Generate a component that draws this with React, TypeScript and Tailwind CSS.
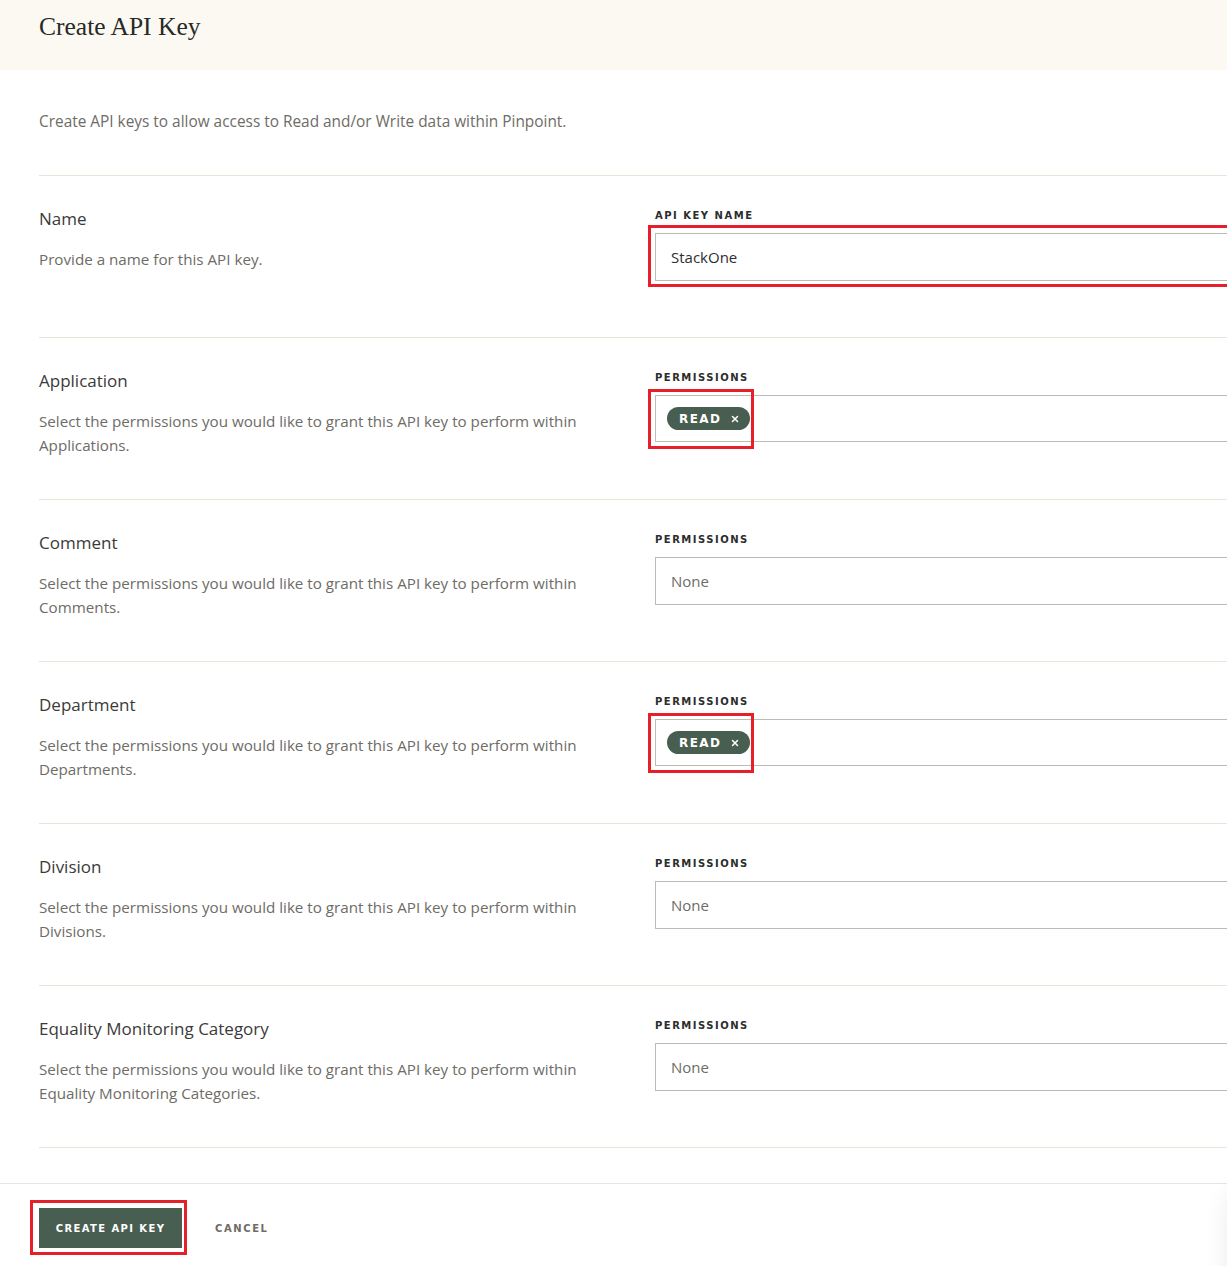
import { X } from 'lucide-react'

type Row = {
  title: string
  description: string
  label: string
  value?: string
  chip?: boolean
  kind: 'text' | 'select'
}

const rows: Row[] = [
  { title: 'Name', description: 'Provide a name for this API key.', label: 'API KEY NAME', value: 'StackOne', kind: 'text' },
  {
    title: 'Application',
    description: 'Select the permissions you would like to grant this API key to perform within Applications.',
    label: 'PERMISSIONS',
    chip: true,
    kind: 'select',
  },
  {
    title: 'Comment',
    description: 'Select the permissions you would like to grant this API key to perform within Comments.',
    label: 'PERMISSIONS',
    kind: 'select',
  },
  {
    title: 'Department',
    description: 'Select the permissions you would like to grant this API key to perform within Departments.',
    label: 'PERMISSIONS',
    chip: true,
    kind: 'select',
  },
  {
    title: 'Division',
    description: 'Select the permissions you would like to grant this API key to perform within Divisions.',
    label: 'PERMISSIONS',
    kind: 'select',
  },
  {
    title: 'Equality Monitoring Category',
    description:
      'Select the permissions you would like to grant this API key to perform within Equality Monitoring Categories.',
    label: 'PERMISSIONS',
    kind: 'select',
  },
]

const sans = "font-['Open_Sans','Noto_Sans',sans-serif]"
const caps = "font-['DejaVu_Sans','Noto_Sans',sans-serif]"

function Field({ row }: { row: Row }) {
  if (row.kind === 'text') {
    return (
      <div className="relative">
        {/* highlight */}
        <span className="pointer-events-none absolute left-[-7px] top-[-8px] bottom-[-6px] right-[-4px] border-[3px] border-[#e6202a]" />
        <div className="flex h-[48px] w-[620px] items-center border border-[#bcbcb4] px-[15px] text-[15px] text-[#2e2e2e]">
          {row.value}
        </div>
      </div>
    )
  }

  if (row.chip) {
    return (
      <div className="relative">
        <span className="pointer-events-none absolute left-[-7px] top-[-6px] h-[60px] w-[106px] border-[3px] border-[#e6202a]" />
        <div className="flex h-[47px] w-[620px] items-center border border-[#bcbcb4] pl-[11px]">
          <span
            className={`flex h-[23px] items-center gap-[9px] rounded-full bg-[#475e50] pl-[12px] pr-[10px] text-[12px] font-bold tracking-[0.12em] text-white ${caps}`}
          >
            READ
            <X size={10} strokeWidth={3.5} />
          </span>
        </div>
      </div>
    )
  }

  return (
    <div className="flex h-[48px] w-[620px] items-center border border-[#bcbcb4] px-[15px] text-[15px] text-[#6e6c66]">
      None
    </div>
  )
}

export default function App() {
  return (
    <div className={`relative min-h-[1266px] overflow-hidden bg-white ${sans}`}>
      {/* Header */}
      <div className="h-[70px] bg-[#fcf9f2] px-[39px] pt-[11px]">
        <h1 className="font-['Liberation_Serif','DejaVu_Serif',serif] text-[25.5px] leading-[32px] text-[#262a28]">
          Create API Key
        </h1>
      </div>

      <div className="pl-[39px]">
        <p className="pt-[40px] pb-[41px] text-[15.4px] leading-[24px] text-[#6e6c66]">
          Create API keys to allow access to Read and/or Write data within Pinpoint.
        </p>

        {rows.map((row, i) => (
          <div
            key={row.title}
            className={`flex border-t border-[#e8e4d8] pt-[31px] ${
              i === rows.length - 1 ? 'h-[163px] border-b' : 'h-[162px]'
            }`}
          >
            <div className="w-[616px] shrink-0 pr-[40px]">
              <h3 className="text-[17px] leading-[24px] font-medium text-[#3a3b39]">{row.title}</h3>
              <p className="mt-[16px] max-w-[550px] text-[15.2px] leading-[24px] text-[#6e6c66]">{row.description}</p>
            </div>
            <div className="min-w-0 flex-1 pt-[2px]">
              <div
                className={`mb-[10px] text-[10px] leading-[14px] font-bold tracking-[0.15em] text-[#2b2d2c] ${caps}`}
              >
                {row.label}
              </div>
              <Field row={row} />
            </div>
          </div>
        ))}
      </div>

      {/* Footer */}
      <div className="mt-[35px] flex items-center border-t border-[#e8e6dc] px-[39px] pt-[24px]">
        <div className="relative">
          <span className="pointer-events-none absolute left-[-9px] right-[-5px] top-[-8px] bottom-[-7px] border-[3px] border-[#e6202a]" />
          <button
            className={`h-[40px] w-[143px] bg-[#475e50] text-[10px] font-bold tracking-[0.14em] text-white ${caps}`}
          >
            CREATE API KEY
          </button>
        </div>
        <button className={`ml-[33px] text-[10px] font-bold tracking-[0.16em] text-[#6e6c66] ${caps}`}>
          CANCEL
        </button>
      </div>

      {/* floating widget shadow at bottom right */}
      <div className="pointer-events-none absolute right-[-60px] top-[1192px] h-[120px] w-[60px] rounded-xl shadow-[0_0_24px_rgba(0,0,0,0.08)]" />
    </div>
  )
}
